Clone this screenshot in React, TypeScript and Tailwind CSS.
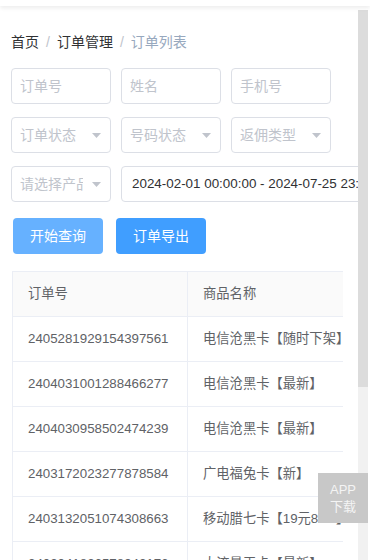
import { ReactNode } from "react";

const font = "font-['Liberation_Sans','Noto_Sans_CJK_SC',sans-serif]";

const rows = [
  ["2405281929154397561", "电信沧黑卡【随时下架】"],
  ["2404031001288466277", "电信沧黑卡【最新】"],
  ["2404030958502474239", "电信沧黑卡【最新】"],
  ["2403172023277878584", "广电福兔卡【新】"],
  ["2403132051074308663", "移动腊七卡【19元80G】"],
  ["2403041826578942176", "大流量王卡【最新】"],
];

function Input({ placeholder }: { placeholder: string }) {
  return (
    <div className="w-[100px] h-[36px] border border-[#dcdfe6] rounded-[4px] flex items-center px-[8px] text-[14px] text-[#c0c4cc] bg-white">
      {placeholder}
    </div>
  );
}

function Caret() {
  return (
    <svg width="9" height="5" viewBox="0 0 9 5" className="shrink-0">
      <path d="M0 0 L9 0 L4.5 5 Z" fill="#c0c4cc" />
    </svg>
  );
}

function Select({ placeholder }: { placeholder: string }) {
  return (
    <div className="w-[100px] h-[36px] border border-[#dcdfe6] rounded-[4px] flex items-center pl-[8px] pr-[9px] text-[14px] text-[#c0c4cc] bg-white">
      <span className="flex-1 overflow-hidden whitespace-nowrap">{placeholder}</span>
      <span className="ml-[9px] flex items-center">
        <Caret />
      </span>
    </div>
  );
}

function Cell({ children, w, head }: { children: ReactNode; w: string; head?: boolean }) {
  return (
    <div
      className={`${w} shrink-0 h-full flex items-center pl-[15px] whitespace-nowrap overflow-hidden border-r border-[#ebeef5] ${
        head ? "bg-[#fafafa]" : ""
      }`}
    >
      {children}
    </div>
  );
}

export default function App() {
  return (
    <div className={`${font} relative w-[370px] h-[560px] overflow-hidden bg-white`}>
      <div className="h-[6px] bg-white shadow-[0_2px_4px_rgba(0,0,0,0.08)] relative z-10" />
      <div className="flex mt-[4px] h-[550px]">
        <div className="w-[358px] overflow-hidden pl-[11px]">
          <div className="pt-[24px] h-[40px] flex items-center text-[14px] leading-[16px] gap-[7px]">
            <span className="text-[#303133]">首页</span>
            <span className="text-[#c0c4cc]">/</span>
            <span className="text-[#303133]">订单管理</span>
            <span className="text-[#c0c4cc]">/</span>
            <span className="text-[#97a8be]">订单列表</span>
          </div>

          <div className="mt-[18px] flex flex-col gap-[13px]">
            <div className="flex gap-[10px]">
              <Input placeholder="订单号" />
              <Input placeholder="姓名" />
              <Input placeholder="手机号" />
            </div>
            <div className="flex gap-[10px]">
              <Select placeholder="订单状态" />
              <Select placeholder="号码状态" />
              <Select placeholder="返佣类型" />
            </div>
            <div className="flex gap-[10px]">
              <Select placeholder="请选择产品" />
              <div className="w-[260px] shrink-0 h-[36px] border border-[#dcdfe6] rounded-[4px] flex items-center pl-[10px] text-[13.4px] text-[#303133] whitespace-nowrap overflow-hidden">
                2024-02-01 00:00:00 - 2024-07-25 23:59:59
              </div>
            </div>
          </div>

          <div className="mt-[16px] flex gap-[13px] pl-[2px]">
            <button className="w-[90px] h-[36px] rounded-[4px] bg-[#66b1ff] text-white text-[14px]">开始查询</button>
            <button className="w-[90px] h-[36px] rounded-[4px] bg-[#409eff] text-white text-[14px]">订单导出</button>
          </div>

          <div className="mt-[17px] ml-[1px] w-[331px] border-l border-t border-[#ebeef5] overflow-hidden text-[13.3px] text-[#606266]">
            <div className="flex h-[45px] border-b border-[#ebeef5]">
              <Cell w="w-[175px]" head>
                订单号
              </Cell>
              <Cell w="w-[200px]" head>
                商品名称
              </Cell>
            </div>
            {rows.map(([id, name]) => (
              <div key={id} className="flex h-[45px] border-b border-[#ebeef5]">
                <Cell w="w-[175px]">{id}</Cell>
                <Cell w="w-[200px]">{name}</Cell>
              </div>
            ))}
          </div>
        </div>

        <div className="w-[10px] bg-[#f1f1f1] flex flex-col">
          <div className="h-[377px] bg-[#dcdcdc]" />
        </div>
      </div>

      <div className="absolute left-[318px] top-[473px] w-[50px] h-[50px] bg-[#c8c8c8] flex flex-col items-center justify-center text-[13px] leading-[17px] text-[#f4f4f4]">
        <span>APP</span>
        <span>下载</span>
      </div>
    </div>
  );
}
